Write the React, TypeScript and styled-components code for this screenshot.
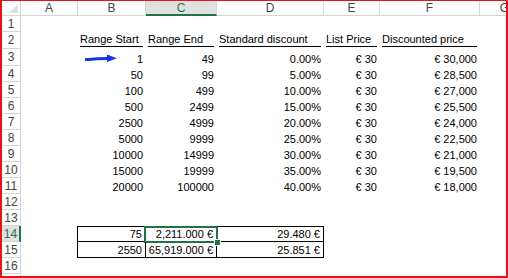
import React from "react";
import styled, { createGlobalStyle, css } from "styled-components";

const GlobalStyle = createGlobalStyle`
  html, body { margin: 0; padding: 0; background: #fff; }
  body { font-family: "Liberation Sans", Arial, sans-serif; }
`;

const GREEN = "#217346";
const GRID = "#d4d4d4";

// column widths A..G (G is cut off by the frame)
const COL_WIDTHS = [57, 68, 71, 107, 56, 100, 50];
const LETTERS = ["A", "B", "C", "D", "E", "F", "G"];
// rows 1..17 (17 only peeks in at the bottom edge)
const ROW_HEIGHTS = [16, 17, 17, 16, 16, 16, 16, 16, 16, 16, 16, 16, 16, 16, 16, 16, 16];

const headers = ["Range Start", "Range End", "Standard discount", "List Price", "Discounted price"];

const tiers = [
  ["1", "49", "0.00%", "€ 30", "€ 30,000"],
  ["50", "99", "5.00%", "€ 30", "€ 28,500"],
  ["100", "499", "10.00%", "€ 30", "€ 27,000"],
  ["500", "2499", "15.00%", "€ 30", "€ 25,500"],
  ["2500", "4999", "20.00%", "€ 30", "€ 24,000"],
  ["5000", "9999", "25.00%", "€ 30", "€ 22,500"],
  ["10000", "14999", "30.00%", "€ 30", "€ 21,000"],
  ["15000", "19999", "35.00%", "€ 30", "€ 19,500"],
  ["20000", "100000", "40.00%", "€ 30", "€ 18,000"],
];

const calc = [
  ["75", "2,211.000 €", "29.480 €"],
  ["2550", "65,919.000 €", "25.851 €"],
];

const Frame = styled.div`
  width: 508px;
  height: 278px;
  box-sizing: border-box;
  border: 2px solid #e5141b;
  border-top-width: 1px;
  overflow: hidden;
  background: #fff;
`;

const Sheet = styled.div`
  display: grid;
  grid-template-columns: 19px ${COL_WIDTHS.map((w) => `${w}px`).join(" ")};
  grid-template-rows: 15px ${ROW_HEIGHTS.map((h) => `${h}px`).join(" ")};
  font-size: 11px;
  color: #000;
`;

const Corner = styled.div`
  position: relative;
  box-sizing: border-box;
  border-right: 1px solid ${GRID};
  border-bottom: 1px solid ${GRID};
  background: #fff;

  &::after {
    content: "";
    position: absolute;
    right: 2px;
    bottom: 2px;
    width: 0;
    height: 0;
    border-left: 9px solid transparent;
    border-bottom: 9px solid #dfdfdf;
  }
`;

const ColHead = styled.div<{ $active?: boolean }>`
  box-sizing: border-box;
  display: flex;
  align-items: center;
  justify-content: center;
  font-size: 12px;
  color: #444;
  background: #fff;
  border-right: 1px solid ${GRID};
  border-bottom: 1px solid ${GRID};
  ${(p) =>
    p.$active &&
    css`
      background: #e1e1e1;
      color: ${GREEN};
      border-bottom: 2px solid ${GREEN};
    `}
`;

const RowHead = styled.div<{ $active?: boolean }>`
  box-sizing: border-box;
  display: flex;
  align-items: center;
  justify-content: center;
  font-size: 12px;
  color: #444;
  background: #fff;
  border-right: 1px solid ${GRID};
  border-bottom: 1px solid ${GRID};
  ${(p) =>
    p.$active &&
    css`
      background: #e1e1e1;
      color: ${GREEN};
      border-right: 2px solid ${GREEN};
    `}
`;

const Cell = styled.div<{
  $align?: "left" | "right";
  $boxed?: boolean;
  $top?: boolean;
  $left?: boolean;
  $selected?: boolean;
}>`
  position: relative;
  box-sizing: border-box;
  display: flex;
  align-items: flex-end;
  justify-content: ${(p) => (p.$align === "right" ? "flex-end" : "flex-start")};
  padding: 0 3px 1px 2px;
  line-height: 12px;
  white-space: nowrap;
  ${(p) =>
    p.$boxed &&
    css`
      border-right: 1px solid #000;
      border-bottom: 1px solid #000;
      ${p.$top && "border-top: 1px solid #000;"}
      ${p.$left && "border-left: 1px solid #000; margin-left: -1px;"}
    `}
  ${(p) =>
    p.$selected &&
    css`
      &::after {
        content: "";
        position: absolute;
        top: -1px;
        left: -2px;
        right: -2px;
        bottom: -2px;
        border: 2px solid ${GREEN};
        pointer-events: none;
      }
    `}
`;

const HeadLabel = styled.span`
  flex: 1;
  margin-bottom: 1px;
  line-height: 13px;
  border-bottom: 1px solid #000;
`;

const FillHandle = styled.span`
  position: absolute;
  right: -5px;
  bottom: -5px;
  width: 5px;
  height: 5px;
  background: ${GREEN};
  border: 1px solid #fff;
  z-index: 2;
`;

const Arrow = styled.svg`
  position: absolute;
  left: 7px;
  top: 5px;
`;

function BlueArrow() {
  return (
    <Arrow width="33" height="9" viewBox="0 0 33 9">
      <path d="M1 5.6 C8 5.2 16 4.6 25 4.3" stroke="#1536e6" strokeWidth="3" strokeLinecap="round" fill="none" />
      <path d="M22 0.6 L32 4.2 L22 8.1 Z" fill="#1536e6" />
    </Arrow>
  );
}

function rowCells(row: number): React.ReactNode[] {
  // cells for columns A..G of one row (1-based)
  const cells: React.ReactNode[] = [];
  for (let c = 0; c < 7; c++) {
    const key = `${row}-${c}`;
    if (row === 2 && c >= 1 && c <= 5) {
      cells.push(
        <Cell key={key}>
          <HeadLabel>{headers[c - 1]}</HeadLabel>
        </Cell>
      );
    } else if (row >= 3 && row <= 11 && c >= 1 && c <= 5) {
      cells.push(
        <Cell key={key} $align="right">
          {row === 3 && c === 1 && <BlueArrow />}
          {tiers[row - 3][c - 1]}
        </Cell>
      );
    } else if ((row === 14 || row === 15) && c >= 1 && c <= 3) {
      const sel = row === 14 && c === 2;
      cells.push(
        <Cell key={key} $align="right" $boxed $top={row === 14} $left={c === 1} $selected={sel}>
          {calc[row - 14][c - 1]}
          {sel && <FillHandle />}
        </Cell>
      );
    } else {
      cells.push(<Cell key={key} />);
    }
  }
  return cells;
}

export default function App() {
  return (
    <>
      <GlobalStyle />
      <Frame>
        <Sheet>
          <Corner />
          {LETTERS.map((l) => (
            <ColHead key={l} $active={l === "C"}>
              {l}
            </ColHead>
          ))}
          {ROW_HEIGHTS.map((_, i) => {
            const row = i + 1;
            return (
              <React.Fragment key={row}>
                <RowHead $active={row === 14}>{row <= 16 ? row : ""}</RowHead>
                {rowCells(row)}
              </React.Fragment>
            );
          })}
        </Sheet>
      </Frame>
    </>
  );
}
